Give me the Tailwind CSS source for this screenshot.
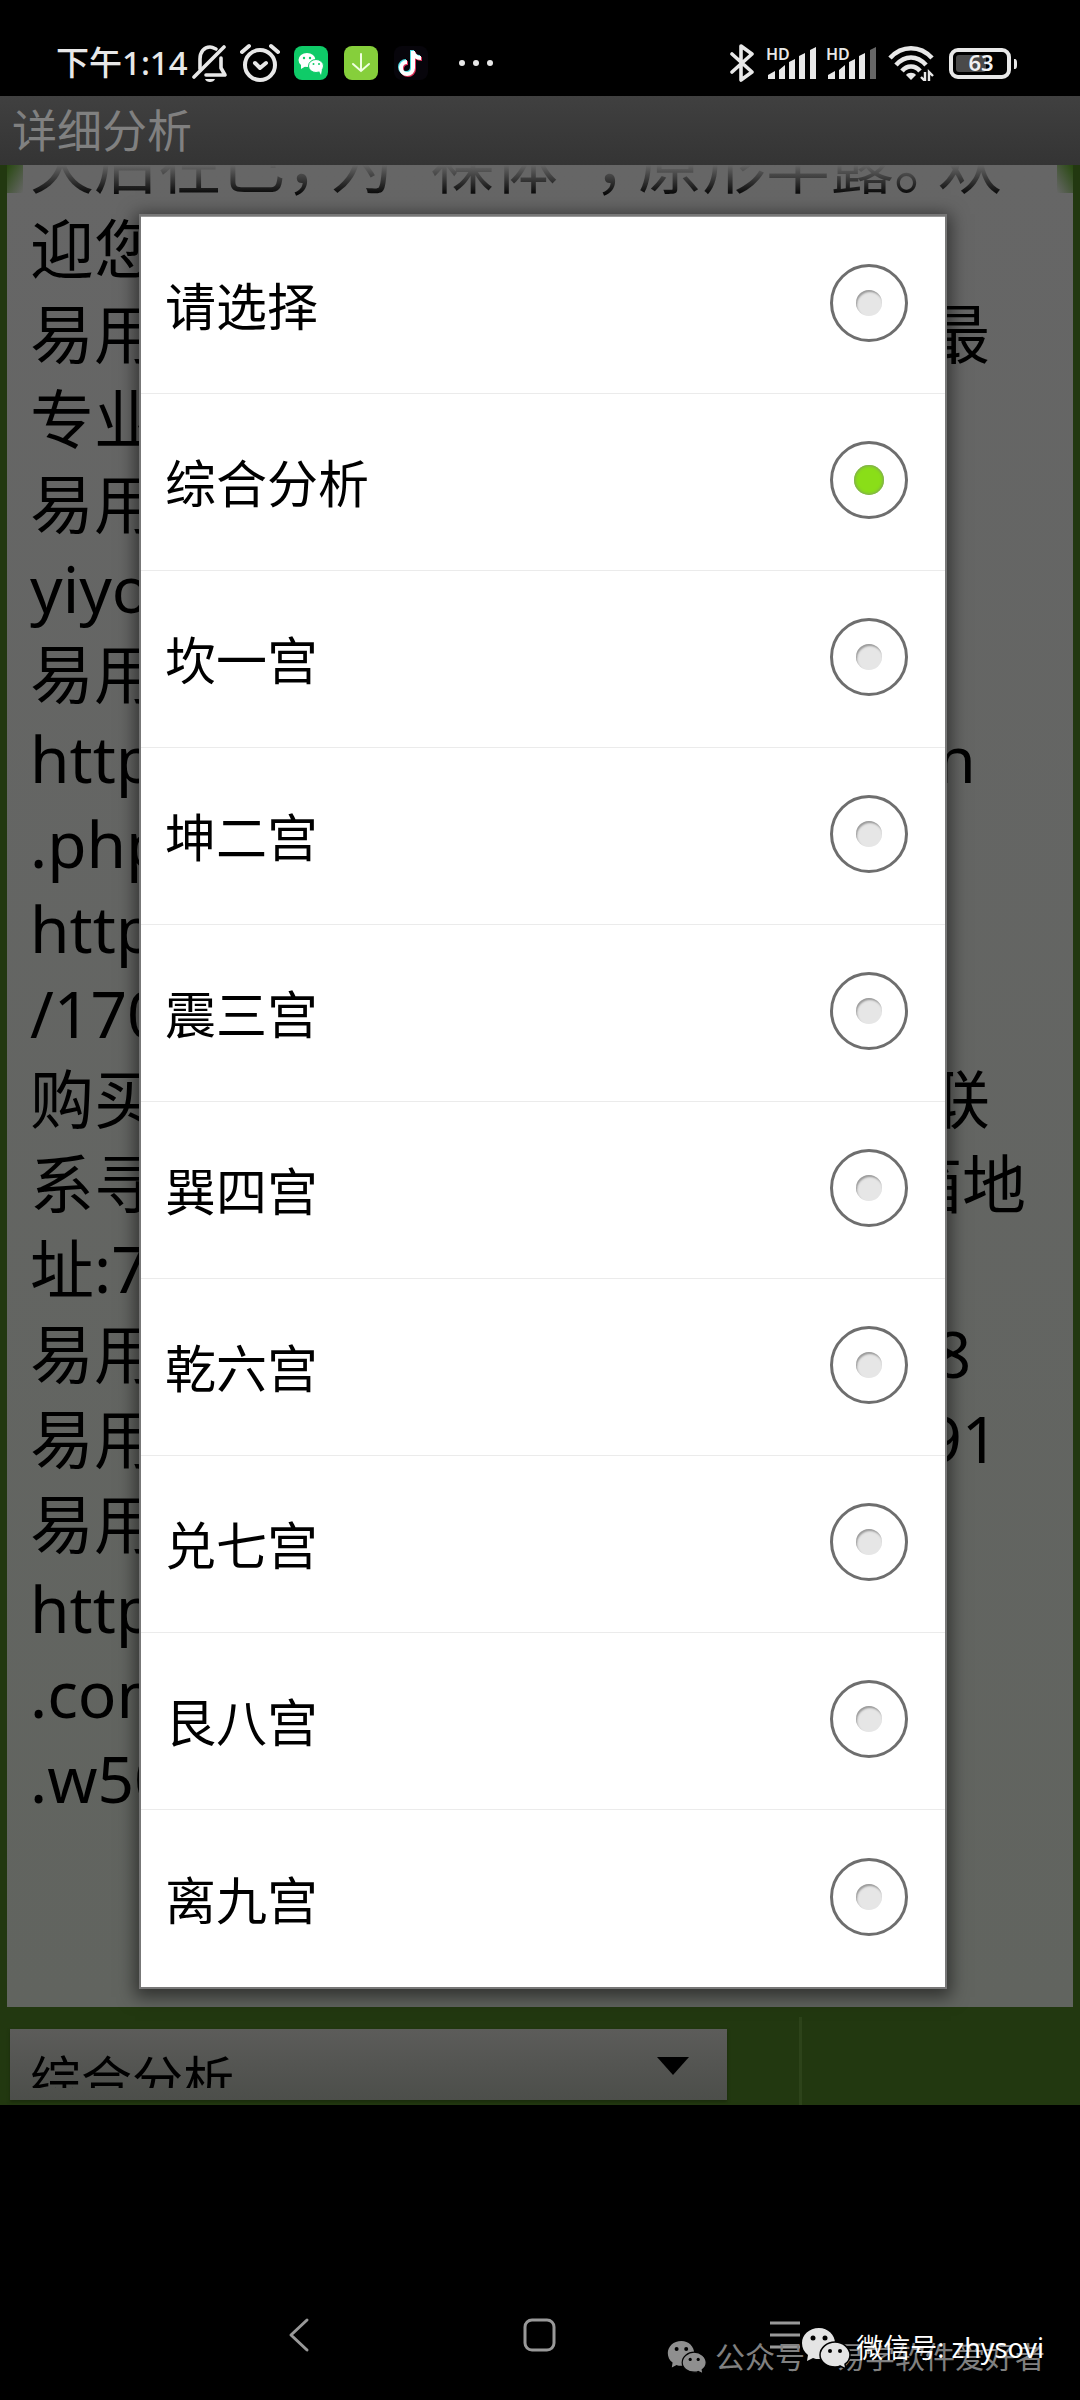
<!DOCTYPE html>
<html lang="zh-CN">
<head>
    <meta charset="UTF-8">
    <meta name="viewport" content="width=device-width, initial-scale=1.0">
    <title>详细分析</title>
    <script src="https://cdn.jsdelivr.net/npm/@tailwindcss/browser@4"></script>
</head>
<body class="bg-black min-h-screen flex flex-col font-['Noto_Sans','Noto_Sans_CJK_SC',sans-serif]">
    <!-- 状态栏 -->
    <header class="h-24 shrink-0 flex items-center justify-between pl-14 pr-[62px] pt-[30px] text-[#e8e8e8]">
        <div class="flex items-center">
            <span class="text-[33px] leading-[40px] font-medium">下午1:14</span>
            <svg class="w-9 h-10 ml-1" viewBox="0 0 36 40" fill="none" stroke="currentColor" stroke-width="3.6" stroke-linecap="round">
                <path d="M2 34 L32 4"/>
                <path d="M8 26 V16 C8 9 12 4 18 4 C20 4 22 5 24 6"/>
                <path d="M29 15 V25 L33 32 H14" stroke-linejoin="round"/>
                <path d="M13 36 H23 C22 40 14 40 13 36 Z" fill="currentColor" stroke="none"/>
            </svg>
            <svg class="size-10 ml-3" viewBox="0 0 40 40" fill="none" stroke="currentColor" stroke-width="4" stroke-linecap="round">
                <circle cx="20" cy="22" r="15"/>
                <path d="M2 9 L9 3 M38 9 L31 3"/>
                <path d="M15 20 L20 25 L26 20" stroke-linejoin="round"/>
            </svg>
            <svg class="size-[34px] ml-[14px]" viewBox="0 0 34 34">
                <rect width="34" height="34" rx="8" fill="#0fcb68"/>
                <ellipse cx="13" cy="14" rx="8.500" ry="7" fill="#fff"/>
                <path d="M7 18 L7 23 L12 20 Z" fill="#fff"/>
                <ellipse cx="22" cy="20" rx="7.500" ry="6.500" fill="#fff" stroke="#0fcb68"/>
                <path d="M25 25 L27 29 L28 23 Z" fill="#fff"/>
                <g fill="#0fcb68"><circle cx="10" cy="12" r="1.200"/><circle cx="16" cy="12" r="1.200"/><circle cx="19.500" cy="18" r="1"/><circle cx="25" cy="18" r="1"/></g>
            </svg>
            <svg class="size-[34px] ml-4" viewBox="0 0 34 34" fill="none" stroke="#f0ffe0" stroke-width="2" stroke-linecap="round">
                <rect width="34" height="34" rx="8" fill="#86cf3b" stroke="none"/>
                <path d="M17 8 V25 M9 18 L17 25 L25 18"/>
            </svg>
            <svg class="size-[34px] ml-4" viewBox="0 0 34 34" fill="none" stroke-width="4">
                <rect width="34" height="34" rx="8" fill="#07050b"/>
                <path d="M19 5 V22 A6 6 0 1 1 13 16 M19 6 C20 10 23 12 27 12" stroke="#e0305a" transform="translate(1 1)"/>
                <path d="M19 5 V22 A6 6 0 1 1 13 16 M19 6 C20 10 23 12 27 12" stroke="#50dce4" transform="translate(-1 -1)"/>
                <path d="M19 5 V22 A6 6 0 1 1 13 16 M19 6 C20 10 23 12 27 12" stroke="#fff"/>
            </svg>
            <svg class="w-9 h-2 ml-[30px]" viewBox="0 0 36 8" fill="currentColor">
                <circle cx="4" cy="4" r="3"/><circle cx="18" cy="4" r="3"/><circle cx="32" cy="4" r="3"/>
            </svg>
        </div>
        <div class="flex items-center">
            <svg class="w-6 h-10" viewBox="0 0 24 40" fill="none" stroke="currentColor" stroke-width="3.6" stroke-linecap="round" stroke-linejoin="round">
                <path d="M2 11 L22 29 L11 37 V3 L22 11 L2 29"/>
            </svg>
            <svg class="w-[50px] h-9 ml-3 overflow-visible" viewBox="0 0 50 36" fill="currentColor">
                <text x="0" y="15" font-size="16" font-weight="600">HD</text>
                <path d="M2 34 V30 L9 26 V34 Z M13 34 V25 L19 20 V34 Z M23 34 V17 L29 14 V34 Z M33 34 V11 L39 8 V34 Z M44 34 V5 L50 2 V34 Z"/>
            </svg>
            <svg class="w-[50px] h-9 ml-[10px] overflow-visible" viewBox="0 0 50 36" fill="currentColor">
                <text x="0" y="15" font-size="16" font-weight="600">HD</text>
                <path d="M2 34 V30 L9 26 V34 Z M13 34 V25 L19 20 V34 Z M23 34 V17 L29 14 V34 Z M33 34 V11 L39 8 V34 Z"/>
                <path d="M44 34 V5 L50 2 V34 Z" fill="#666"/>
            </svg>
            <svg class="w-[46px] h-9 ml-3" viewBox="0 0 46 36" fill="none" stroke="currentColor" stroke-width="4.600">
                <path d="M2 13 C14 0 32 0 44 13"/>
                <path d="M8 20 C17 10 29 10 38 20"/>
                <path d="M14 26 C19 20 27 20 32 26"/>
                <path d="M18 30 C20 27 26 27 28 30 L23 35 Z" fill="currentColor" stroke="none"/>
                <path d="M37 27 V36 L33 32 M41 36 V27 L45 31" stroke-width="2.400"/>
            </svg>
            <svg class="w-[70px] h-9 ml-[14px]" viewBox="0 0 70 36">
                <rect x="3" y="5" width="58" height="27" rx="7" fill="none" stroke="currentColor" stroke-width="4"/>
                <rect x="8" y="10" width="30" height="17" rx="3" fill="#4a4a4a"/>
                <path d="M66 14 C69 14 69 16 69 19 C69 22 69 24 66 24 Z" fill="currentColor"/>
                <text x="33" y="26" font-size="22" font-weight="600" text-anchor="middle" fill="#f2f2f2">63</text>
            </svg>
        </div>
    </header>

    <main class="relative flex-1 flex flex-col bg-[#223810]">
        <h1 class="h-[69px] shrink-0 pl-3 text-[45px] leading-[69px] text-[#808080] bg-linear-to-b from-[#404040] to-[#343434]">详细分析</h1>

        <!-- 分析正文 -->
        <section class="relative flex-1 mx-[7px] pl-[23px] overflow-hidden whitespace-nowrap text-[64px] leading-[85px] bg-linear-to-b from-[#666666] to-[#61645f] text-black">
            <div class="-mt-11">
                <p>天后在巳<span class="inline-block w-11">，</span>为<span class="inline-block w-9">“</span>裸体<span class="inline-block w-9">”</span><span class="inline-block w-11">，</span>原形毕露<span class="inline-block w-11">。</span>欢</p>
                <p>迎您使用易用软件</p>
                <p>易用软件工作室是目前国内行业最</p>
                <p>专业的软件工作室</p>
                <p>易用软件客服微信</p>
                <p>yiyongsoft</p>
                <p>易用软件官方网站</p>
                <p>http://www.yiyongsoft.com/can</p>
                <p>.php</p>
                <p>http://www.yiyong.com</p>
                <p>/170000</p>
                <p>购买正版软件或者注册用户请先联</p>
                <p>系寻求帮助的客服QQ号码及邮箱地</p>
                <p>址:7000000@qq.com</p>
                <p>易用软件客服号:0000000000008</p>
                <p>易用软件客服电话:000000000091</p>
                <p>易用软件淘宝网店</p>
                <p>http://www.yiyong</p>
                <p>.com/shop</p>
                <p>.w500.com</p>
            </div>
            <div class="absolute inset-x-0 top-0 h-8 bg-linear-to-b from-[#666666] to-transparent"></div>
            <div class="absolute left-0 top-0 w-4 h-7 bg-linear-to-br from-[#27480f] to-transparent"></div>
            <div class="absolute right-0 top-0 w-4 h-7 bg-linear-to-bl from-[#27480f] to-transparent"></div>
        </section>

        <div class="h-[98px] shrink-0 flex pt-[22px] pb-[5px] pl-[10px]">
            <div class="relative w-[67%]">
                <select aria-label="分析内容" class="appearance-none w-full h-[71px] pl-5 pt-3 pb-3 text-[51px] leading-[76px] text-black bg-linear-to-b from-[#5c5c5a] to-[#4c4e4a] shadow-[0_2px_3px_#1a2a0c]">
                    <option>综合分析</option>
                </select>
                <svg class="absolute right-[38px] top-7 w-8 h-[18px]" viewBox="0 0 32 18"><path d="M0 0 H32 L16 18 Z"/></svg>
            </div>
            <div class="w-[3px] ml-[72px] -mt-3 -mb-[5px] bg-[#2d431a]"></div>
        </div>

        <!-- 选择框 -->
        <form class="absolute left-[141px] right-[135px] top-[120px] bg-white border-t border-[#999] shadow-[0_0_0_2px_#777,0_4px_16px_6px_rgba(0,0,0,0.5)] text-[51px] leading-[68px] text-black">
            <label class="flex items-center justify-between h-[177px] pt-0.5 pl-6 pr-[37px] border-b border-[#ebebeb]">
                请选择
                <input type="radio" name="gong" class="appearance-none size-[78px] mb-1.5 rounded-full border-3 border-[#6e6e6e] flex items-center justify-center before:size-[26px] before:rounded-full before:bg-[#e6e6e6] before:shadow-[inset_1px_2px_2px_#999]">
            </label>
            <label class="flex items-center justify-between h-[177px] pt-0.5 pl-6 pr-[37px] border-b border-[#ebebeb]">
                综合分析
                <input type="radio" name="gong" checked class="appearance-none size-[78px] mb-1.5 rounded-full border-3 border-[#6e6e6e] flex items-center justify-center before:size-[30px] before:rounded-full before:bg-[#8ade18] before:shadow-[inset_0_0_3px_1px_#7f9f60]">
            </label>
            <label class="flex items-center justify-between h-[177px] pt-0.5 pl-6 pr-[37px] border-b border-[#ebebeb]">
                坎一宫
                <input type="radio" name="gong" class="appearance-none size-[78px] mb-1.5 rounded-full border-3 border-[#6e6e6e] flex items-center justify-center before:size-[26px] before:rounded-full before:bg-[#e6e6e6] before:shadow-[inset_1px_2px_2px_#999]">
            </label>
            <label class="flex items-center justify-between h-[177px] pt-0.5 pl-6 pr-[37px] border-b border-[#ebebeb]">
                坤二宫
                <input type="radio" name="gong" class="appearance-none size-[78px] mb-1.5 rounded-full border-3 border-[#6e6e6e] flex items-center justify-center before:size-[26px] before:rounded-full before:bg-[#e6e6e6] before:shadow-[inset_1px_2px_2px_#999]">
            </label>
            <label class="flex items-center justify-between h-[177px] pt-0.5 pl-6 pr-[37px] border-b border-[#ebebeb]">
                震三宫
                <input type="radio" name="gong" class="appearance-none size-[78px] mb-1.5 rounded-full border-3 border-[#6e6e6e] flex items-center justify-center before:size-[26px] before:rounded-full before:bg-[#e6e6e6] before:shadow-[inset_1px_2px_2px_#999]">
            </label>
            <label class="flex items-center justify-between h-[177px] pt-0.5 pl-6 pr-[37px] border-b border-[#ebebeb]">
                巽四宫
                <input type="radio" name="gong" class="appearance-none size-[78px] mb-1.5 rounded-full border-3 border-[#6e6e6e] flex items-center justify-center before:size-[26px] before:rounded-full before:bg-[#e6e6e6] before:shadow-[inset_1px_2px_2px_#999]">
            </label>
            <label class="flex items-center justify-between h-[177px] pt-0.5 pl-6 pr-[37px] border-b border-[#ebebeb]">
                乾六宫
                <input type="radio" name="gong" class="appearance-none size-[78px] mb-1.5 rounded-full border-3 border-[#6e6e6e] flex items-center justify-center before:size-[26px] before:rounded-full before:bg-[#e6e6e6] before:shadow-[inset_1px_2px_2px_#999]">
            </label>
            <label class="flex items-center justify-between h-[177px] pt-0.5 pl-6 pr-[37px] border-b border-[#ebebeb]">
                兑七宫
                <input type="radio" name="gong" class="appearance-none size-[78px] mb-1.5 rounded-full border-3 border-[#6e6e6e] flex items-center justify-center before:size-[26px] before:rounded-full before:bg-[#e6e6e6] before:shadow-[inset_1px_2px_2px_#999]">
            </label>
            <label class="flex items-center justify-between h-[177px] pt-0.5 pl-6 pr-[37px] border-b border-[#ebebeb]">
                艮八宫
                <input type="radio" name="gong" class="appearance-none size-[78px] mb-1.5 rounded-full border-3 border-[#6e6e6e] flex items-center justify-center before:size-[26px] before:rounded-full before:bg-[#e6e6e6] before:shadow-[inset_1px_2px_2px_#999]">
            </label>
            <label class="flex items-center justify-between h-[177px] pt-0.5 pl-6 pr-[37px]">
                离九宫
                <input type="radio" name="gong" class="appearance-none size-[78px] mb-1.5 rounded-full border-3 border-[#6e6e6e] flex items-center justify-center before:size-[26px] before:rounded-full before:bg-[#e6e6e6] before:shadow-[inset_1px_2px_2px_#999]">
            </label>
        </form>
    </main>

    <!-- 导航键 -->
    <footer class="relative h-[295px] shrink-0">
        <nav class="absolute inset-x-0 bottom-[47px] px-[282px] flex items-center justify-between text-[#999]">
            <button aria-label="返回" class="w-9 h-9">
                <svg viewBox="0 0 36 36" fill="none" stroke="currentColor" stroke-width="3" stroke-linecap="round" stroke-linejoin="round"><path d="M25 3 L9 18 L25 33"/></svg>
            </button>
            <button aria-label="主页" class="w-9 h-9">
                <svg viewBox="0 0 36 36" fill="none" stroke="currentColor" stroke-width="3"><rect x="3" y="3" width="29" height="30" rx="7"/></svg>
            </button>
            <button aria-label="菜单" class="w-9 h-9">
                <svg class="overflow-visible" viewBox="0 0 36 36" fill="none" stroke="currentColor" stroke-width="3"><path d="M8 6 H38 M8 18 H38 M8 30 H38"/></svg>
            </button>
        </nav>
        <!-- 水印 -->
        <div class="absolute right-[35px] bottom-[21px] flex items-center text-[30px] leading-[44px] text-[#808080] whitespace-nowrap">
            <svg class="w-10 h-8 mr-2 overflow-visible" viewBox="0 0 48 40" fill="#8f8f8f">
                <path d="M17 0 C7 0 0 7 0 15 C0 20 2 24 6 27 L5 33 L11 30 C13 31 15 31 17 31 C27 31 33 24 33 15 C33 7 26 0 17 0 Z"/>
                <path d="M33 14 C25 14 18 20 18 27 C18 34 25 39 33 39 C35 39 37 39 38 38 L44 41 L43 36 C46 34 48 31 48 27 C48 20 41 14 33 14 Z" stroke="#000" stroke-width="1.500"/>
                <g fill="#000"><circle cx="11" cy="10" r="2.500"/><circle cx="23" cy="10" r="2.500"/><circle cx="28" cy="23" r="2"/><circle cx="38" cy="23" r="2"/></g>
            </svg>
            <span>公众号<span class="mx-[11px]">·</span>易学软件爱好者</span>
        </div>
        <div class="absolute right-9 bottom-[30px] flex items-center text-[27px] leading-[44px] text-white whitespace-nowrap">
            <svg class="w-12 h-10 mr-1.5 overflow-visible" viewBox="0 0 48 40" fill="#e4e4e4">
                <path d="M17 0 C7 0 0 7 0 15 C0 20 2 24 6 27 L5 33 L11 30 C13 31 15 31 17 31 C27 31 33 24 33 15 C33 7 26 0 17 0 Z"/>
                <path d="M33 14 C25 14 18 20 18 27 C18 34 25 39 33 39 C35 39 37 39 38 38 L44 41 L43 36 C46 34 48 31 48 27 C48 20 41 14 33 14 Z" stroke="#000" stroke-width="1.500"/>
                <g fill="#000"><circle cx="11" cy="10" r="2.500"/><circle cx="23" cy="10" r="2.500"/><circle cx="28" cy="23" r="2"/><circle cx="38" cy="23" r="2"/></g>
            </svg>
            微信号: zhysovi
        </div>
    </footer>
</body>
</html>
